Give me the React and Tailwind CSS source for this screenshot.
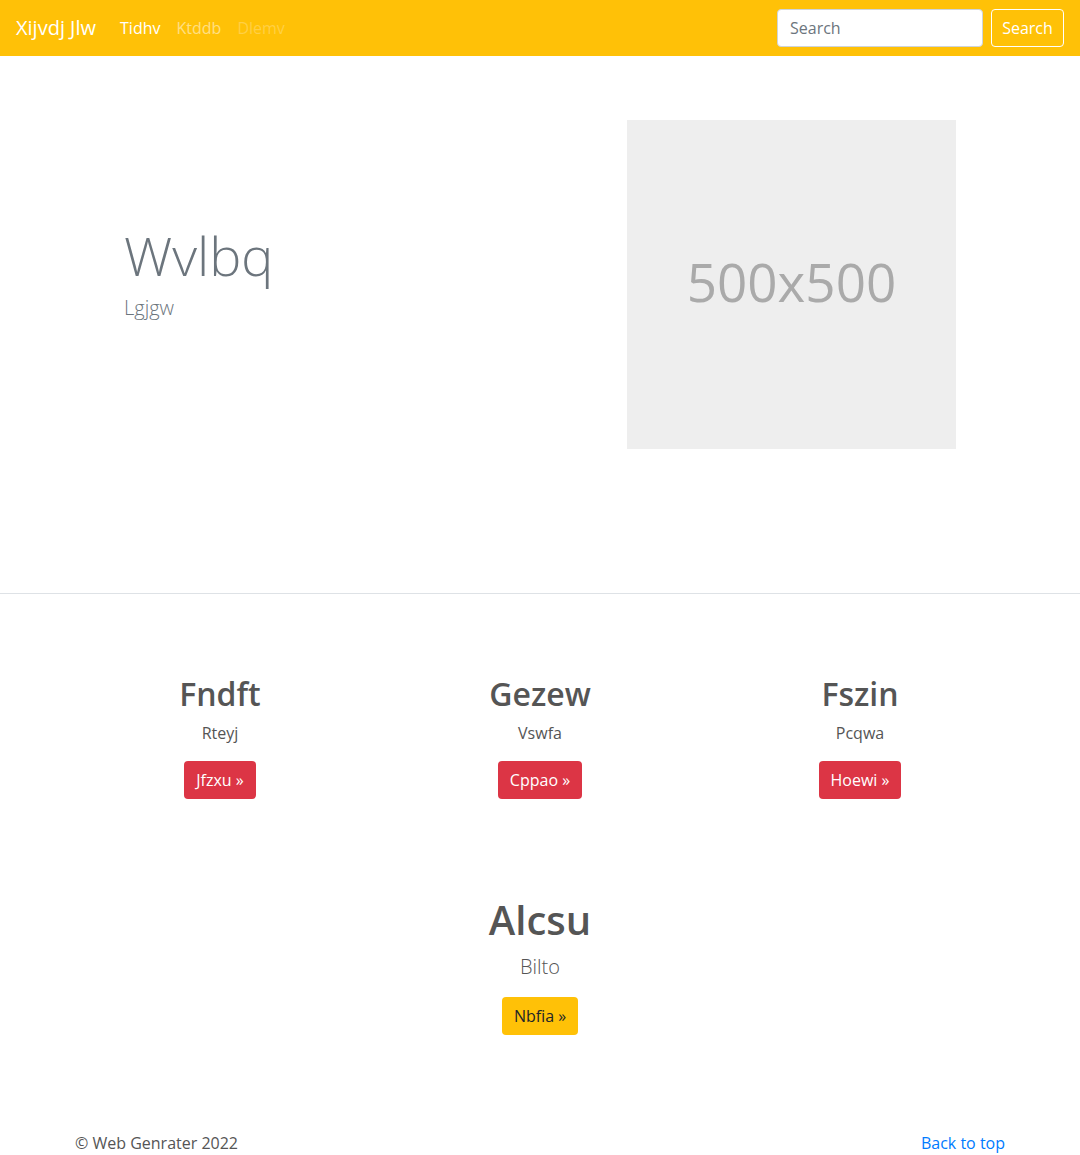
import React from 'react';

const font = { fontFamily: '"Open Sans", "Noto Sans", sans-serif' };

const Navbar = () => (
    <nav className="h-[56px] bg-[#ffc107] flex items-center px-4">
        <a href="#" className="text-white text-[20px] leading-[30px] mr-4">Xijvdj Jlw</a>
        <ul className="flex items-center">
            <li><a href="#" className="block px-2 py-2 text-white text-[16px]">Tidhv</a></li>
            <li><a href="#" className="block px-2 py-2 text-white/50 text-[16px]">Ktddb</a></li>
            <li><span className="block px-2 py-2 text-white/25 text-[16px]">Dlemv</span></li>
        </ul>
        <form className="ml-auto flex items-center">
            <input
                type="text"
                placeholder="Search"
                className="w-[206px] h-[38px] px-3 bg-white border border-[#ced4da] rounded-[4px] text-[16px] text-[#495057] placeholder:text-[#6c757d] mr-2 outline-none"
            />
            <button type="button" className="w-[73px] h-[38px] border border-white rounded-[4px] text-white text-[16px]">
                Search
            </button>
        </form>
    </nav>
);

const Hero = () => (
    <section className="pt-[64px] pb-[144px]">
        <div className="w-[960px] mx-auto px-[15px] grid grid-cols-2">
            {/* Text */}
            <div className="flex flex-col justify-center pl-[49px] pb-[24px]">
                <h1 className="text-[54px] leading-[67px] font-light text-[#6c757d]">Wvlbq</h1>
                <p className="text-[20px] leading-[30px] font-light text-[#6c757d] mt-[4px]">Lgjgw</p>
            </div>
            {/* Placeholder image */}
            <div className="pl-[87px]">
                <div className="w-[329px] h-[329px] bg-[#eeeeee] flex items-center justify-center">
                    <span className="text-[53px] text-[#aaaaaa] leading-none -mt-[6px]">500x500</span>
                </div>
            </div>
        </div>
    </section>
);

const Feature = ({ title, text, cta }) => (
    <div className="flex flex-col items-center text-center">
        <h2 className="text-[32px] leading-[38px] font-semibold text-[#555555] mb-2">{title}</h2>
        <p className="text-[16px] leading-[24px] text-[#555555] mb-4">{text}</p>
        <a href="#" className="h-[38px] px-3 flex items-center bg-[#dc3545] text-white text-[16px] rounded-[4px]">
            {cta} &raquo;
        </a>
    </div>
);

export default function App() {
    return (
        <div className="bg-white min-h-screen text-[#555555]" style={font}>
            <Navbar />
            <Hero />

            <section className="border-t border-[#dee2e6] pt-[81px]">
                <div className="w-[960px] mx-auto grid grid-cols-3">
                    <Feature title="Fndft" text="Rteyj" cta="Jfzxu" />
                    <Feature title="Gezew" text="Vswfa" cta="Cppao" />
                    <Feature title="Fszin" text="Pcqwa" cta="Hoewi" />
                </div>

                {/* Call to action */}
                <div className="flex flex-col items-center text-center mt-[97px]">
                    <h1 className="text-[40px] leading-[48px] font-semibold text-[#555555] mb-2">Alcsu</h1>
                    <p className="text-[20px] leading-[30px] font-light text-[#555555] mb-[15px]">Bilto</p>
                    <a href="#" className="h-[38px] px-3 flex items-center bg-[#ffc107] text-[#212529] text-[16px] rounded-[4px]">
                        Nbfia &raquo;
                    </a>
                </div>
            </section>

            <footer className="w-[960px] mx-auto px-[15px] pt-[96px] pb-4 flex justify-between text-[16px] leading-[24px]">
                <p className="text-[#555555]">&copy; Web Genrater 2022</p>
                <a href="#" className="text-[#007bff]">Back to top</a>
            </footer>
        </div>
    );
}
